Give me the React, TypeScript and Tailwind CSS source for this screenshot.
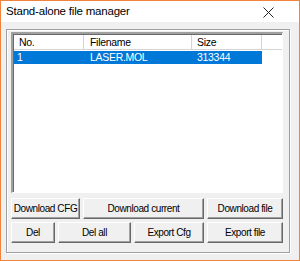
import React from 'react'

const font = { fontFamily: '"Liberation Sans", Arial, sans-serif' }

function Btn({ w, label }: { w: string; label: string }) {
  return (
    <button
      className={`${w} h-[21px] shrink-0 whitespace-nowrap bg-[#f0f0f0] text-[10px] tracking-[-0.4px] text-black border-t border-l border-t-white border-l-white border-r border-b border-r-[#696969] border-b-[#696969] shadow-[inset_-1px_-1px_0_#a0a0a0] leading-none`}
    >
      {label}
    </button>
  )
}

export default function App() {
  return (
    <div style={font} className="w-[300px] h-[261px] border border-[#f0843c] bg-[#f0f0f0] flex flex-col overflow-hidden">
      {/* title bar */}
      <div className="h-[21px] bg-white flex items-center justify-between pl-[5px] pr-[25px]">
        <span className="text-[11.5px] tracking-[-0.2px] text-black">Stand-alone file manager</span>
        <svg width="11" height="11" viewBox="0 0 11 11" className="mt-[2px]">
          <path d="M0.5 0.5 L10.5 10.5 M10.5 0.5 L0.5 10.5" stroke="#222" strokeWidth="1" />
        </svg>
      </div>

      {/* frame */}
      <div className="flex-1 mt-[7px] ml-[5px] mr-[9px] mb-[7px] border border-[#a0a0a0] shadow-[inset_1px_1px_0_white,1px_1px_0_white] pt-[2px] pl-[4px] pr-[6px] flex flex-col">
        {/* list view */}
        <div className="h-[161px] bg-white border-t-2 border-l-2 border-t-[#a0a0a0] border-l-[#a0a0a0] border-b border-r border-b-white border-r-white shadow-[inset_1px_1px_0_#696969] flex flex-col text-[10.5px] tracking-[-0.3px]">
          <div className="h-[15px] flex text-black mt-[1px] ml-[1px] leading-[14px]">
            <div className="w-[70px] pl-[5px] border-r border-r-[#d5d5d5] border-b border-b-[#d5d5d5] bg-white">No.</div>
            <div className="w-[108px] pl-[6px] border-r border-r-[#d5d5d5] border-b border-b-[#d5d5d5] bg-white">Filename</div>
            <div className="w-[70px] pl-[5px] border-r border-r-[#d5d5d5] border-b border-b-[#d5d5d5] bg-white">Size</div>
            <div className="flex-1 border-b border-b-[#d5d5d5] bg-white"></div>
          </div>
          <div className="mt-[1px] ml-[1px] w-[248px] h-[13px] bg-[#0078d7] text-white flex leading-[13px]">
            <div className="w-[70px] pl-[3px]">1</div>
            <div className="w-[108px] pl-[6px]">LASER.MOL</div>
            <div className="w-[70px] pl-[5px]">313344</div>
          </div>
        </div>

        {/* buttons */}
        <div className="mt-[5px] flex gap-[3px]">
          <Btn w="w-[69px]" label="Download CFG" />
          <Btn w="w-[121px]" label="Download current" />
          <Btn w="w-[76px]" label="Download file" />
        </div>
        <div className="mt-[3px] flex gap-[3px]">
          <Btn w="w-[44px]" label="Del" />
          <Btn w="w-[73px]" label="Del all" />
          <Btn w="w-[70px]" label="Export Cfg" />
          <Btn w="w-[76px]" label="Export file" />
        </div>
      </div>
    </div>
  )
}
